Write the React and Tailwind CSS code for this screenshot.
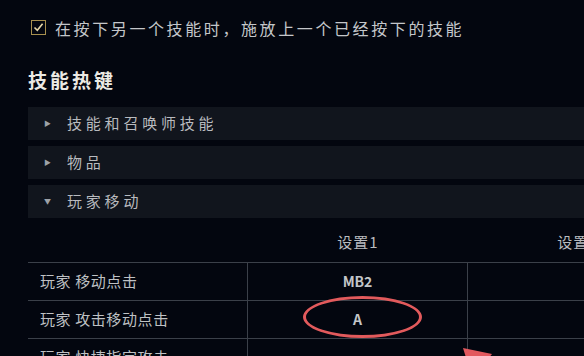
import React from "react";

const rows = [
  { name: "玩家 移动点击", key1: "MB2" },
  { name: "玩家 攻击移动点击", key1: "A", marked: true },
  { name: "玩家 快捷指定攻击", key1: "" },
];

const sections = [
  { label: "技能和召唤师技能", open: false },
  { label: "物品", open: false },
  { label: "玩家移动", open: true },
];

const App = () => {
  return (
    <div
      className="relative w-[584px] h-[356px] overflow-hidden bg-[#03060f]"
      style={{ fontFamily: '"Noto Sans CJK SC", "Noto Sans", sans-serif' }}
    >
      {/* checkbox option */}
      <div className="flex items-center pl-[31px] pt-[19px] h-[36px]">
        <div className="w-[15px] h-[15px] border border-[#a8904f] flex items-center justify-center">
          <svg width="11" height="11" viewBox="0 0 11 11" fill="none">
            <path d="M1.5 5.5 L4.3 8.3 L9.6 1.8" stroke="#e6d7a8" strokeWidth="1.6" />
          </svg>
        </div>
        <span className="ml-[9px] text-[16px] tracking-[2.6px] text-[#c4c6ca] whitespace-nowrap">
          在按下另一个技能时，施放上一个已经按下的技能
        </span>
      </div>

      {/* hotkeys heading */}
      <h2 className="mt-[31px] pl-[28px] text-[19px] leading-[26px] font-bold tracking-[3px] text-[#eceae4]">
        技能热键
      </h2>

      {/* accordion */}
      <div className="mt-[14px] ml-[28px] flex flex-col gap-[6px]">
        {sections.map((s) => (
          <div key={s.label} className="h-[33px] bg-[#11151d] flex items-center">
            <span className="w-[39px] pl-[16px] text-[7px] text-[#9ea2a8]">{s.open ? "▼" : "▶"}</span>
            <span className="text-[15px] tracking-[3.8px] text-[#b9bbbf] whitespace-nowrap">{s.label}</span>
          </div>
        ))}
      </div>

      {/* table header */}
      <div className="ml-[28px] grid grid-cols-[220px_220px_220px] h-[44px] items-center pt-[4px]">
        <span />
        <span className="text-center text-[15px] tracking-[1px] text-[#b9bbbf]">设置1</span>
        <span className="text-center text-[15px] tracking-[1px] text-[#b9bbbf]">设置2</span>
      </div>

      {/* table */}
      <div className="ml-[28px] w-[680px] border-t border-[#3b4049]">
        {rows.map((r) => (
          <div key={r.name} className="grid grid-cols-[220px_220px_240px] h-[38px] border-b border-[#3b4049]">
            <div className="flex items-center pl-[12px] text-[15px] tracking-[0.6px] text-[#bfc1c4] whitespace-nowrap border-r border-[#3b4049]">
              {r.name}
            </div>
            <div className="relative flex items-center justify-center text-[14px] font-bold text-[#c3c5c8] border-r border-[#3b4049]">
              {r.key1}
              {r.marked && (
                <div className="absolute left-[55px] top-[-5px] w-[119px] h-[42px] rounded-[50%] border-[3px] border-[#e25a5c]" />
              )}
            </div>
            <div />
          </div>
        ))}
      </div>

      {/* red arrow head */}
      <svg className="absolute left-[458px] top-[342px]" width="50" height="20" viewBox="0 0 50 20">
        <polygon points="5,6 34,12 26,22 10,22" fill="#e2585e" />
      </svg>
    </div>
  );
};

export default App;
